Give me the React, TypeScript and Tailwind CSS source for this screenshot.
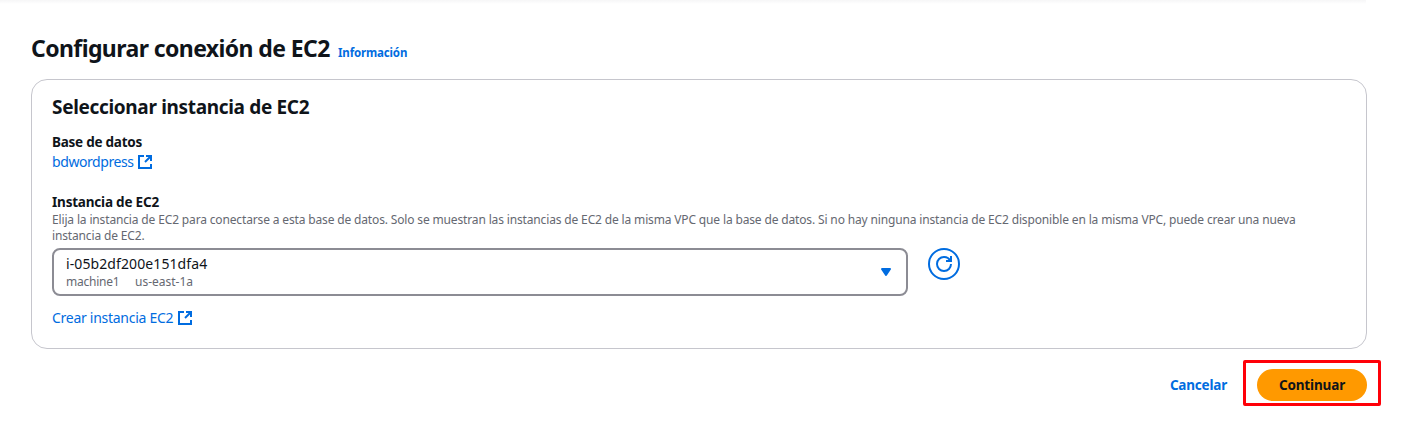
function ExternalIcon() {
  return (
    <svg viewBox="0 0 16 16" className="size-4 shrink-0" fill="none" stroke="#006ce0" strokeWidth="2">
      <path d="M9 2h5v5" />
      <path d="m8 8 6-6" />
      <path d="M14 10v4H2V2h5" />
    </svg>
  );
}

export default function App() {
  return (
    <div className="h-[443px] w-[1410px] overflow-hidden bg-white font-['Noto_Sans','Open_Sans',sans-serif] text-sm text-[#0f141a]">
      <div className="h-1 w-[1366px] bg-linear-to-b from-[#f6f6f7] to-white" />
      <main className="ml-[31px] w-[1336px] pt-[29px]">
        <header className="flex h-[46px] items-baseline gap-2">
          <h1 className="w-[299px] text-[23px] leading-[30px] font-bold whitespace-nowrap tracking-[-0.59px]">Configurar conexión de EC2</h1>
          <a className="text-[11.5px] leading-4 font-bold whitespace-nowrap text-[#006ce0] tracking-[-0.15px]">Información</a>
        </header>
        <section className="h-[270px] rounded-2xl border border-[#c6c6cd] px-5 pt-[15px]">
          <h2 className="h-6 text-[19px] leading-6 font-bold whitespace-nowrap tracking-[-0.33px]">Seleccionar instancia de EC2</h2>
          <div className="mt-[13px] h-5 text-[13.5px] leading-5 font-bold tracking-[-0.25px]">Base de datos</div>
          <a className="flex h-5 items-center gap-1 leading-5 text-[#006ce0]">
            <span className="w-[81px] tracking-[-0.42px]">bdwordpress</span>
            <ExternalIcon />
          </a>
          <div className="mt-5 h-5 text-[13.5px] leading-5 font-bold tracking-[-0.2px]">Instancia de EC2</div>
          <p className="h-8 text-xs leading-4 whitespace-nowrap text-[#656871] tracking-[-0.15px]">
            Elija la instancia de EC2 para conectarse a esta base de datos. Solo se muestran las instancias de EC2 de la misma VPC que la base de datos. Si no hay ninguna instancia de EC2 disponible en la misma VPC, puede crear una nueva
            <br />
            instancia de EC2.
          </p>
          <div className="mt-1 flex gap-5">
            <button className="flex h-12 w-[856px] items-center justify-between rounded-lg border-2 border-[#8c8c94] px-3 text-left">
              <span className="block">
                <span className="block h-5 leading-5 tracking-[0.1px]">i-05b2df200e151dfa4</span>
                <span className="flex h-4 gap-4 text-xs leading-4 text-[#656871]">
                  <span className="w-[53px] tracking-[-0.22px]">machine1</span>
                  <span>us-east-1a</span>
                </span>
              </span>
              <svg viewBox="0 0 16 16" className="size-4" fill="#006ce0" stroke="#006ce0" strokeWidth="2" strokeLinejoin="round">
                <path d="M4 5h8l-4 6-4-6z" />
              </svg>
            </button>
            <button className="flex size-8 items-center justify-center rounded-full border-2 border-[#006ce0]">
              <svg viewBox="0 0 16 16" className="size-4" fill="none" stroke="#006ce0" strokeWidth="2">
                <path d="M10 5h5V0" />
                <path d="M15 8a6.957 6.957 0 0 1-7 7 6.957 6.957 0 0 1-7-7 6.957 6.957 0 0 1 7-7 6.87 6.87 0 0 1 6.3 4" />
              </svg>
            </button>
          </div>
          <a className="mt-3 flex h-5 items-center gap-1 leading-5 text-[#006ce0]">
            <span className="w-[121px] whitespace-nowrap tracking-[-0.28px]">Crear instancia EC2</span>
            <ExternalIcon />
          </a>
        </section>
        <footer className="-mr-[14px] mt-[11px] flex items-center justify-end gap-4">
          <button className="mt-1 text-[13.5px] leading-5 font-bold text-[#006ce0] tracking-[-0.2px]">Cancelar</button>
          <div className="flex h-[46px] w-[138px] justify-center rounded-xs border-3 border-[#ff0008] pt-1.5">
            <button className="h-8 w-[110px] rounded-full bg-[#ff9900] text-[13.5px] leading-5 font-bold tracking-[-0.15px]">Continuar</button>
          </div>
        </footer>
      </main>
    </div>
  );
}
